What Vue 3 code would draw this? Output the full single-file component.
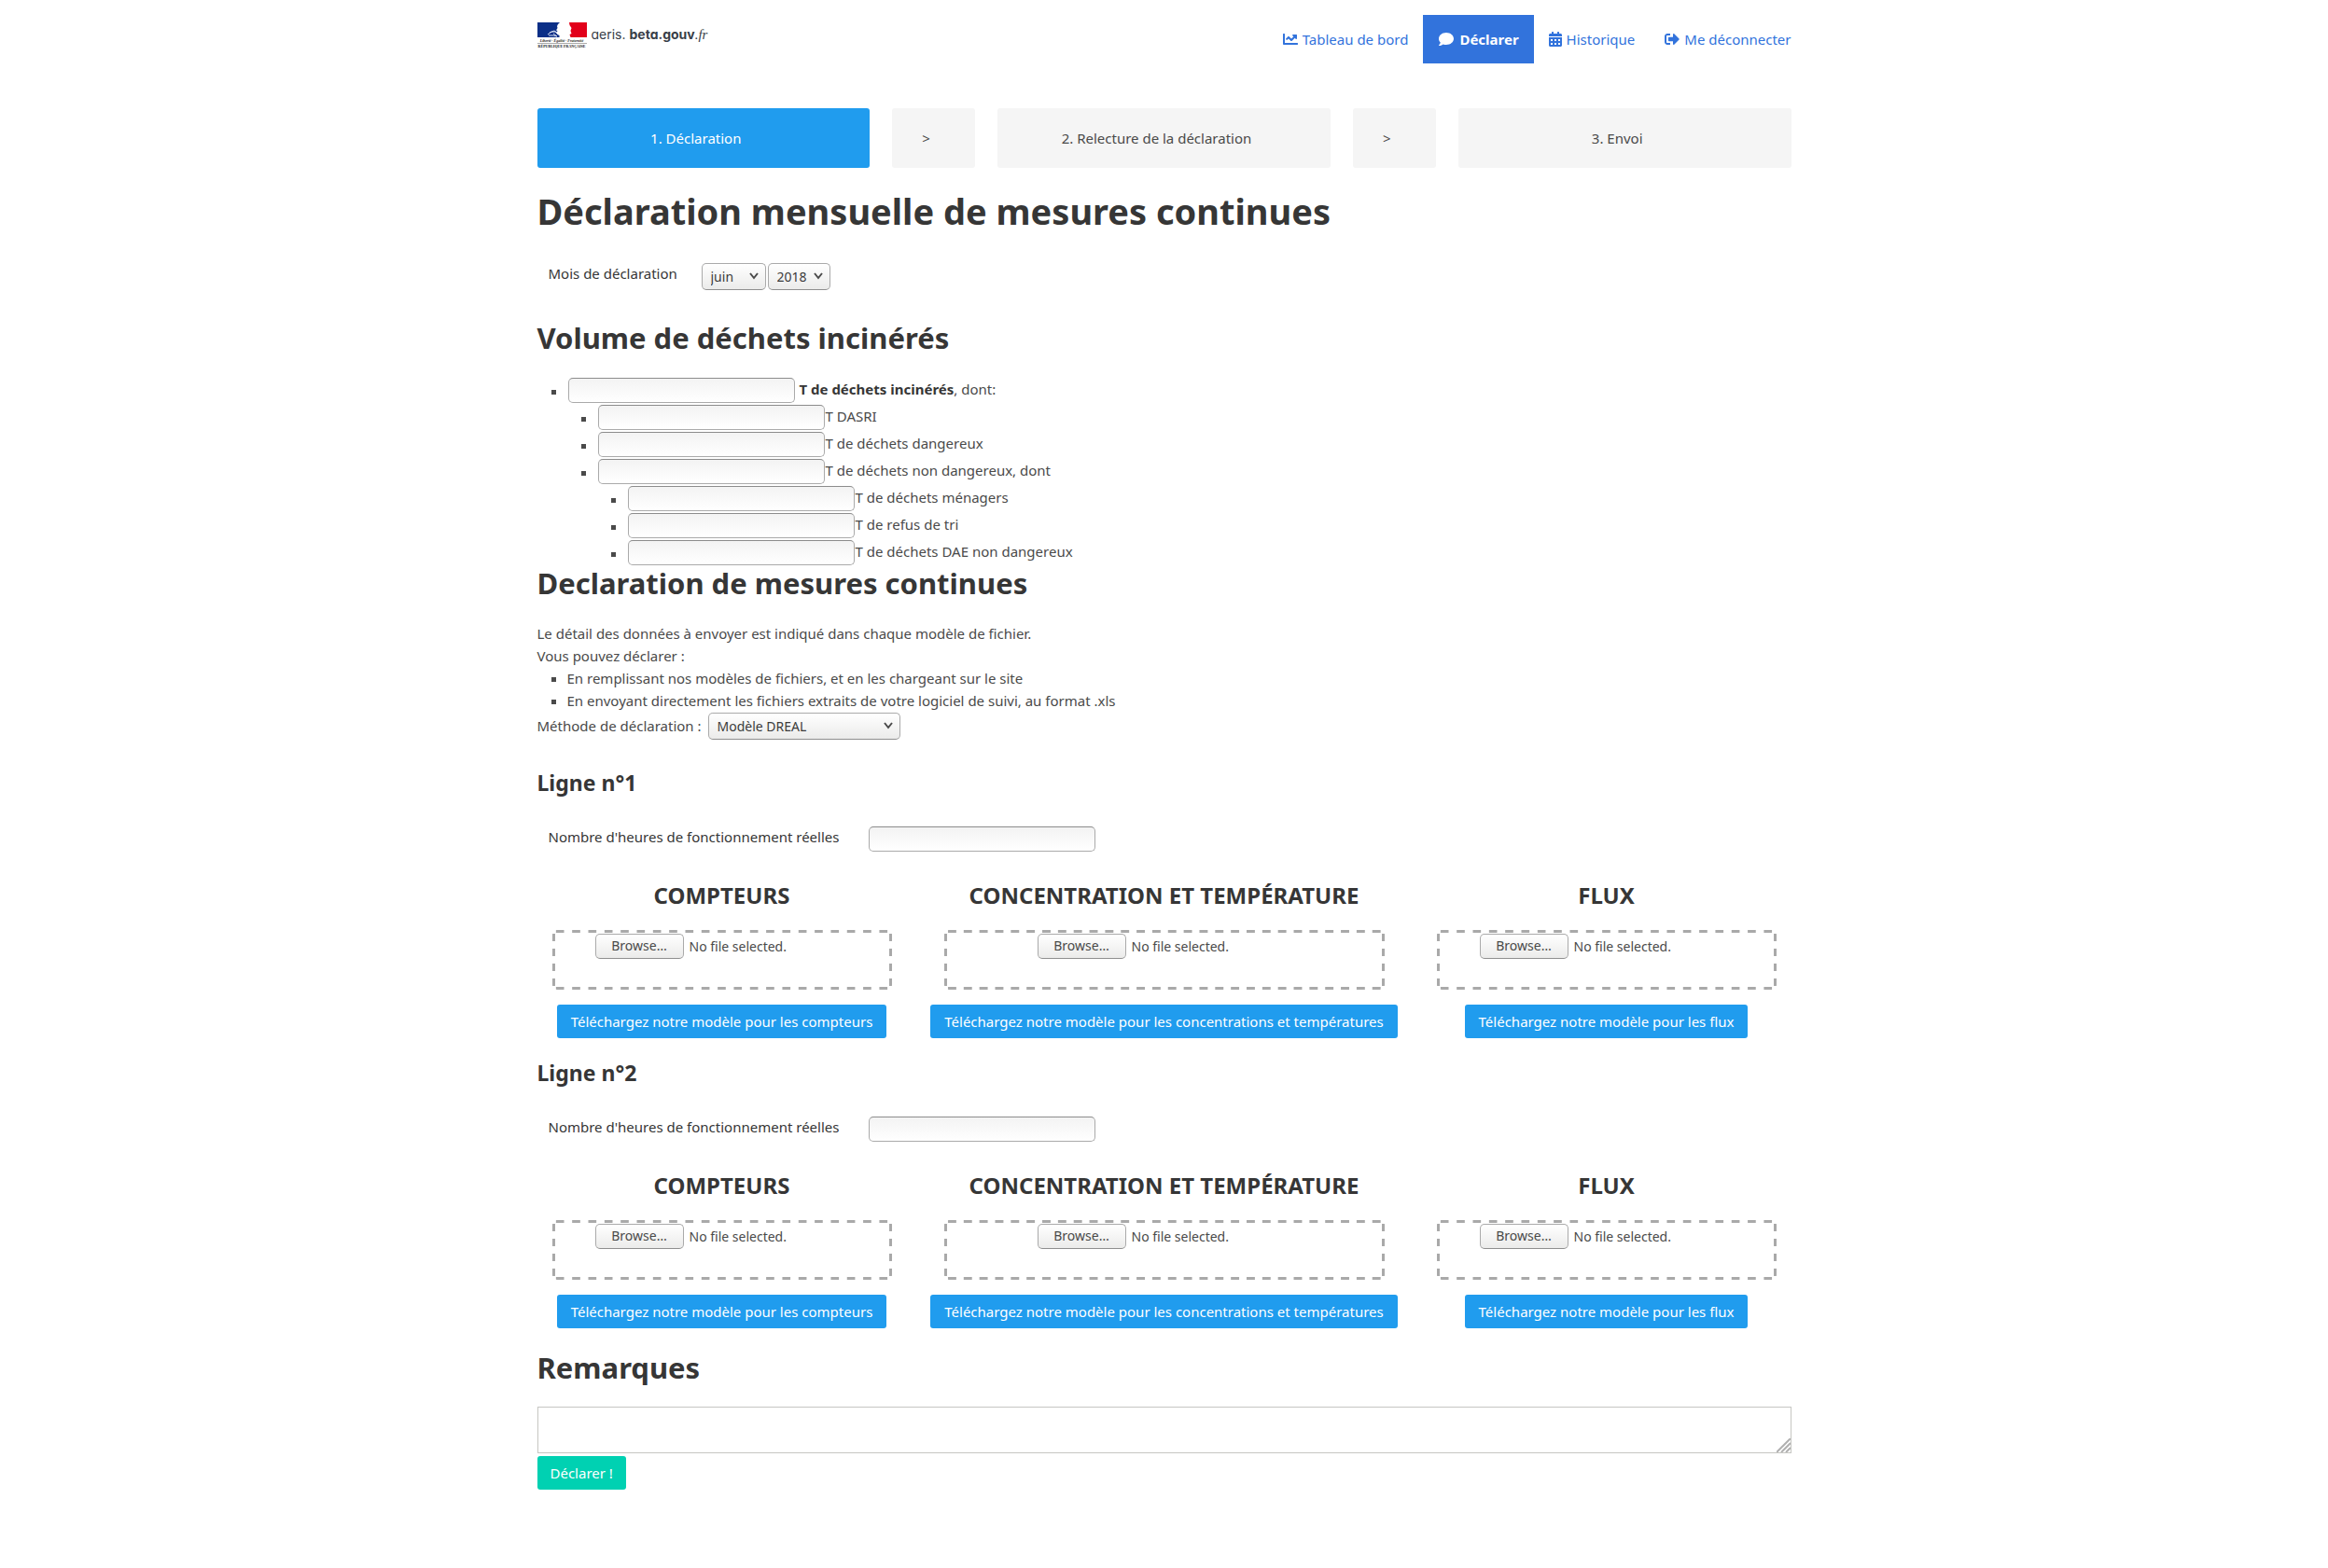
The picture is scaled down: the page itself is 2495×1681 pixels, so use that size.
<script setup>
import { ref, reactive } from 'vue'

const navItems = [
  {
    label: 'Tableau de bord',
    box: '0 0 512 512',
    width: 16,
    path: 'M496 384H64V80c0-8.84-7.16-16-16-16H16C7.16 64 0 71.16 0 80v336c0 17.67 14.33 32 32 32h464c8.84 0 16-7.16 16-16v-32c0-8.84-7.16-16-16-16zM464 96H345.94c-21.38 0-32.09 25.85-16.97 40.97l32.4 32.4L288 242.75l-73.37-73.37c-12.5-12.5-32.76-12.5-45.25 0l-68.69 68.69c-6.25 6.25-6.25 16.38 0 22.63l22.62 22.62c6.25 6.25 16.38 6.25 22.63 0L192 237.25l73.37 73.37c12.5 12.5 32.76 12.5 45.25 0l96-96 32.4 32.4c15.12 15.12 40.97 4.41 40.97-16.97V112c.01-8.84-7.15-16-15.99-16z',
  },
  {
    label: 'Déclarer',
    active: true,
    box: '0 0 512 512',
    width: 18,
    path: 'M256 32C114.6 32 0 125.1 0 240c0 49.6 21.4 95 57 130.7C44.5 421.1 2.7 466 2.2 466.5c-2.2 2.3-2.8 5.7-1.5 8.7S4.8 480 8 480c66.3 0 116-31.8 140.6-51.4 32.7 12.3 69 19.4 107.4 19.4 141.4 0 256-93.1 256-208S397.4 32 256 32z',
  },
  {
    label: 'Historique',
    box: '0 0 448 512',
    width: 14,
    path: 'M0 464c0 26.5 21.5 48 48 48h352c26.5 0 48-21.5 48-48V192H0v272zm320-196c0-6.6 5.4-12 12-12h40c6.6 0 12 5.4 12 12v40c0 6.6-5.4 12-12 12h-40c-6.6 0-12-5.4-12-12v-40zm0 128c0-6.6 5.4-12 12-12h40c6.6 0 12 5.4 12 12v40c0 6.6-5.4 12-12 12h-40c-6.6 0-12-5.4-12-12v-40zM192 268c0-6.6 5.4-12 12-12h40c6.6 0 12 5.4 12 12v40c0 6.6-5.4 12-12 12h-40c-6.6 0-12-5.4-12-12v-40zm0 128c0-6.6 5.4-12 12-12h40c6.6 0 12 5.4 12 12v40c0 6.6-5.4 12-12 12h-40c-6.6 0-12-5.4-12-12v-40zM64 268c0-6.6 5.4-12 12-12h40c6.6 0 12 5.4 12 12v40c0 6.6-5.4 12-12 12H76c-6.6 0-12-5.4-12-12v-40zm0 128c0-6.6 5.4-12 12-12h40c6.6 0 12 5.4 12 12v40c0 6.6-5.4 12-12 12H76c-6.6 0-12-5.4-12-12v-40zM400 64h-48V16c0-8.8-7.2-16-16-16h-32c-8.8 0-16 7.2-16 16v48H160V16c0-8.8-7.2-16-16-16h-32c-8.8 0-16 7.2-16 16v48H48C21.5 64 0 85.5 0 112v48h448v-48c0-26.5-21.5-48-48-48z',
  },
  {
    label: 'Me déconnecter',
    box: '0 0 512 512',
    width: 16,
    path: 'M497 273L329 441c-15 15-41 4.5-41-17v-96H152c-13.3 0-24-10.7-24-24v-96c0-13.3 10.7-24 24-24h136V88c0-21.4 25.9-32 41-17l168 168c9.3 9.4 9.3 24.6 0 34zM192 436v-40c0-6.6-5.4-12-12-12H96c-17.7 0-32-14.3-32-32V160c0-17.7 14.3-32 32-32h84c6.6 0 12-5.4 12-12V76c0-6.6-5.4-12-12-12H96c-53 0-96 43-96 96v192c0 53 43 96 96 96h84c6.6 0 12-5.4 12-12z',
  },
]

const steps = ['1. Déclaration', '>', '2. Relecture de la déclaration', '>', '3. Envoi']
const months = ['janvier', 'février', 'mars', 'avril', 'mai', 'juin', 'juillet', 'août', 'septembre', 'octobre', 'novembre', 'décembre']
const lines = [1, 2]
const uploads = [
  { key: 'compteurs', title: 'COMPTEURS', template: 'Téléchargez notre modèle pour les compteurs' },
  { key: 'concentrations', title: 'CONCENTRATION ET TEMPÉRATURE', template: 'Téléchargez notre modèle pour les concentrations et températures' },
  { key: 'flux', title: 'FLUX', template: 'Téléchargez notre modèle pour les flux' },
]

const month = ref('juin')
const year = ref('2018')
const method = ref('Modèle DREAL')
const remarks = ref('')
const waste = reactive({ total: '', dasri: '', dangerous: '', safe: '', household: '', refused: '', dae: '' })
const hours = reactive({ 1: '', 2: '' })
</script>

<template>
  <div class="container">
    <header class="topbar">
      <a class="brand" href="#">
        <svg class="marianne" viewBox="0 0 53 28" width="53" height="28" aria-hidden="true">
          <path fill="#0b2f87" d="M0 0h24l-2 2-1 2 .5 2-1.500 2.500 1.500.5-1 2 1 2 2 1v2H0z" />
          <path fill="#e2001a" d="M34 0h19v16H35.500l-1-3 2-1-1-3 1-3-2-3z" />
          <path fill="none" stroke="#d5dcf0" stroke-width="1" d="M11 13l4-3 4 0 3 3M13 11l5-2 3 2M12 14l5 0 4 1M17 12l4 3" />
          <text x="26" y="21" font-size="4" text-anchor="middle" font-style="italic" font-weight="700" font-family="Liberation Serif, serif" fill="#222">Liberté · Égalité · Fraternité</text>
          <path stroke="#aaa" stroke-width="1" d="M0 22.500h53" />
          <text x="26" y="27" font-size="4" text-anchor="middle" font-weight="700" font-family="Liberation Serif, serif" fill="#111">RÉPUBLIQUE FRANÇAISE</text>
        </svg>
        <span class="wordmark">aeris. <b>beta.gouv</b><i>.fr</i></span>
      </a>
      <nav class="nav">
        <a v-for="item in navItems" :key="item.label" href="#" class="nav-item" :class="{ active: item.active }">
          <svg :viewBox="item.box" :width="item.width" height="16" aria-hidden="true"><path fill="currentColor" :d="item.path" /></svg>
          <span>{{ item.label }}</span>
        </a>
      </nav>
    </header>

    <main>
      <div class="steps">
        <div v-for="(step, i) in steps" :key="i" class="step" :class="{ current: i === 0 }">{{ step }}</div>
      </div>

      <h1>Déclaration mensuelle de mesures continues</h1>

      <div class="field">
        <label class="short" for="month">Mois de déclaration</label>
        <div class="selects">
          <span class="select month">
            <select id="month" v-model="month"><option v-for="m in months" :key="m">{{ m }}</option></select>
            <svg viewBox="0 0 10 8" width="10" height="8" aria-hidden="true"><path d="M1 1l4 5 4-5" /></svg>
          </span>
          <span class="select year">
            <select v-model="year" aria-label="Année"><option>2017</option><option>2018</option></select>
            <svg viewBox="0 0 10 8" width="10" height="8" aria-hidden="true"><path d="M1 1l4 5 4-5" /></svg>
          </span>
        </div>
      </div>

      <h2>Volume de déchets incinérés</h2>
      <ul>
        <li>
          <div class="row total">
            <input id="w-total" v-model="waste.total" type="text">
            <label for="w-total"><strong>T de déchets incinérés</strong>, dont:</label>
          </div>
          <ul>
            <li><div class="row"><input id="w-dasri" v-model="waste.dasri" type="text"><label for="w-dasri">T DASRI</label></div></li>
            <li><div class="row"><input id="w-danger" v-model="waste.dangerous" type="text"><label for="w-danger">T de déchets dangereux</label></div></li>
            <li>
              <div class="row"><input id="w-safe" v-model="waste.safe" type="text"><label for="w-safe">T de déchets non dangereux, dont</label></div>
              <ul>
                <li><div class="row"><input id="w-house" v-model="waste.household" type="text"><label for="w-house">T de déchets ménagers</label></div></li>
                <li><div class="row"><input id="w-refus" v-model="waste.refused" type="text"><label for="w-refus">T de refus de tri</label></div></li>
                <li><div class="row"><input id="w-dae" v-model="waste.dae" type="text"><label for="w-dae">T de déchets DAE non dangereux</label></div></li>
              </ul>
            </li>
          </ul>
        </li>
      </ul>

      <h2>Declaration de mesures continues</h2>
      <p>Le détail des données à envoyer est indiqué dans chaque modèle de fichier.</p>
      <p>Vous pouvez déclarer :</p>
      <ul>
        <li>En remplissant nos modèles de fichiers, et en les chargeant sur le site</li>
        <li>En envoyant directement les fichiers extraits de votre logiciel de suivi, au format .xls</li>
      </ul>
      <div class="method">
        <label for="method">Méthode de déclaration :</label>
        <span class="select model">
          <select id="method" v-model="method"><option>Modèle DREAL</option><option>Fichiers extraits du logiciel</option></select>
          <svg viewBox="0 0 10 8" width="10" height="8" aria-hidden="true"><path d="M1 1l4 5 4-5" /></svg>
        </span>
      </div>

      <section v-for="n in lines" :key="n">
        <h3>Ligne n°{{ n }}</h3>
        <div class="field">
          <label class="long" :for="`hours-${n}`">Nombre d'heures de fonctionnement réelles</label>
          <input :id="`hours-${n}`" v-model="hours[n]" type="text">
        </div>
        <div class="uploads">
          <div v-for="u in uploads" :key="u.key" class="upload">
            <h4>{{ u.title }}</h4>
            <div class="dropzone">
              <label class="file">
                <input type="file">
                <span class="browse">Browse…</span>
                <span>No file selected.</span>
              </label>
            </div>
            <a class="button" href="#">{{ u.template }}</a>
          </div>
        </div>
      </section>

      <h2><label for="remarks">Remarques</label></h2>
      <div class="remarks">
        <textarea id="remarks" v-model="remarks"></textarea>
        <svg viewBox="0 0 15 15" width="15" height="15" aria-hidden="true"><path d="M0 15L15 0M5 15L15 5M10 15L15 10" /></svg>
      </div>
      <button type="submit" class="button primary">Déclarer !</button>
    </main>
  </div>
</template>

<style>
body {
  margin: 0;
  background: #fff;
}
</style>

<style scoped>
.container {
  max-width: 1344px;
  margin: 0 auto;
  padding-bottom: 48px;
  color: #4a4a4a;
  font: 15px/24px "Noto Sans", "Open Sans", sans-serif;
}

.topbar {
  display: flex;
  justify-content: space-between;
  align-items: flex-start;
  padding: 16px 0 48px;
}

.brand {
  display: flex;
  gap: 5px;
  padding-top: 8px;
  color: #383e48;
  text-decoration: none;
}

.wordmark {
  font: 14px/26px Inter, sans-serif;
  font-feature-settings: "cv11";
  white-space: nowrap;
}

.wordmark i {
  font: italic 15px "Liberation Serif", serif;
}

.nav {
  display: flex;
}

.nav-item {
  display: flex;
  align-items: center;
  gap: 5px;
  height: 52px;
  padding: 0 16px;
  color: #3273dc;
  text-decoration: none;
}

.nav-item:last-child {
  padding-right: 0;
}

.nav-item.active {
  background: #3273dc;
  color: #fff;
  font-weight: 700;
}

.steps {
  display: grid;
  grid-template-columns: 4fr 1fr 4fr 1fr 4fr;
  gap: 24px;
  margin-bottom: 24px;
}

.step {
  padding: 20px 40px 20px 24px;
  border-radius: 3px;
  background: #f5f5f5;
  text-align: center;
}

.step.current {
  background: #209cee;
  color: #fff;
}

h1,
h2,
h3,
h4 {
  margin: 0;
  color: #363636;
  font-weight: 700;
}

h1 {
  margin-bottom: 33px;
  font-size: 38px;
  line-height: 45px;
}

h2 {
  margin-bottom: 24px;
  font-size: 31px;
  line-height: 36px;
}

h3 {
  margin-bottom: 33px;
  font-size: 23px;
  line-height: 27px;
}

h4 {
  margin-bottom: 24px;
  font-size: 24px;
  line-height: 27px;
}

p {
  margin: 0;
}

ul {
  margin: 0;
  padding-left: 32px;
  list-style: square;
}

strong {
  color: #363636;
}

.field {
  display: flex;
  align-items: flex-start;
  gap: 24px;
  margin-bottom: 33px;
  padding: 0 12px;
}

.field > label {
  color: #363636;
  line-height: 22px;
}

.short {
  width: 140px;
}

.long {
  width: 319px;
}

input[type="text"] {
  box-sizing: border-box;
  width: 243px;
  height: 27px;
  margin: 0;
  padding: 0 6px;
  border: 1px solid #aaa;
  border-top-color: #8c8c8c;
  border-radius: 5px;
  background: linear-gradient(#f3f3f3, #fff);
  color: #4a4a4a;
  font: inherit;
}

.row {
  box-sizing: border-box;
  display: flex;
  align-items: flex-start;
  gap: 1px;
  height: 29px;
  padding: 1px 0 0 1px;
}

.row.total {
  gap: 5px;
}

.selects {
  display: flex;
  gap: 2px;
}

.select {
  position: relative;
  display: block;
}

.select select {
  box-sizing: border-box;
  display: block;
  width: 100%;
  height: 29px;
  margin: 0;
  padding: 0 9px;
  border: 1px solid #aaa;
  border-bottom-color: #8f8f8f;
  border-radius: 5px;
  background: linear-gradient(#fff, #ebebea);
  color: #3c3c3c;
  font: 14px "Noto Sans", sans-serif;
  appearance: none;
}

.select svg {
  position: absolute;
  top: 10px;
  right: 8px;
  pointer-events: none;
}

.select path {
  fill: none;
  stroke: #4a4a4a;
  stroke-width: 2;
}

.month {
  width: 69px;
}

.year {
  width: 67px;
}

.model {
  width: 206px;
}

.method {
  display: flex;
  align-items: center;
  gap: 7px;
  height: 30px;
  margin-bottom: 33px;
}

.uploads {
  display: grid;
  grid-template-columns: 11fr 14fr 11fr;
  gap: 24px;
  margin-bottom: 24px;
}

.upload {
  display: flex;
  flex-direction: column;
  align-items: center;
}

.dropzone {
  --dash-x: linear-gradient(90deg, transparent 25%, #a9a9a9 25% 75%, transparent 75%);
  --dash-y: linear-gradient(transparent 25%, #a9a9a9 25% 75%, transparent 75%);
  box-sizing: border-box;
  align-self: stretch;
  display: flex;
  justify-content: center;
  align-items: flex-start;
  height: 64px;
  margin: 0 16px 16px;
  padding-top: 4px;
  border-radius: 5px;
  background:
    var(--dash-x) left top / 17px 3px round no-repeat,
    var(--dash-x) left bottom / 17px 3px round no-repeat,
    var(--dash-y) left top / 3px 16px no-repeat round,
    var(--dash-y) right top / 3px 16px no-repeat round;
}

.file {
  position: relative;
  display: flex;
  align-items: center;
  gap: 6px;
  width: 272px;
  font-size: 14px;
}

.file input {
  position: absolute;
  inset: 0;
  width: 100%;
  opacity: 0;
}

.browse {
  box-sizing: border-box;
  width: 95px;
  height: 27px;
  border: 1px solid #aaa;
  border-bottom-color: #8f8f8f;
  border-radius: 5px;
  background: linear-gradient(#fff, #ebebea);
  text-align: center;
}

.button {
  box-sizing: border-box;
  height: 36px;
  padding: 0 15px;
  border: 0;
  border-radius: 3px;
  background: #209cee;
  color: #fff;
  font: 15px/36px "Noto Sans", sans-serif;
  text-decoration: none;
  white-space: nowrap;
}

.button.primary {
  padding: 0 14px;
  background: #00d1b2;
}

.remarks {
  position: relative;
  margin-bottom: 3px;
}

.remarks textarea {
  box-sizing: border-box;
  display: block;
  width: 100%;
  height: 50px;
  margin: 0;
  padding: 4px;
  border: 1px solid #c6c6c2;
  background: #fff;
  color: #4a4a4a;
  font: inherit;
  resize: none;
}

.remarks svg {
  position: absolute;
  right: 1px;
  bottom: 1px;
  pointer-events: none;
}

.remarks path {
  fill: none;
  stroke: #b0b0b0;
  stroke-width: 2;
}
</style>
